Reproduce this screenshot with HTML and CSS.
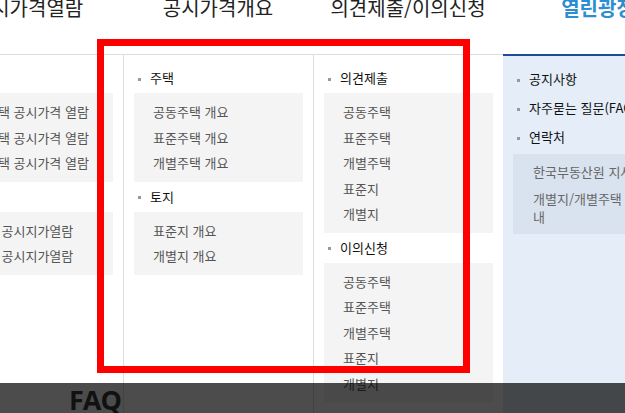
FILE: index.html
```html
<!DOCTYPE html>
<html lang="ko">
  <head>
    <meta charset="UTF-8" />
    <meta name="viewport" content="width=device-width, initial-scale=1.0" />
    <title>공시가격개요</title>

    <!-- CSS -->
    <link rel="stylesheet" href="styles.css">
  </head>
  <body>
    <div id="wrapper">
      <ul class="gnb">
        <li><a href="#">공시가격열람</a></li>
        <li><a href="#">공시가격개요</a></li>
        <li><a href="#">의견제출/이의신청</a></li>
        <li class="on"><a href="#">열린광장</a></li>
      </ul>

      <div class="mega">
        <div class="col">
          <p class="tit">주택</p>
          <ul class="sub">
            <li>공동주택 공시가격 열람</li>
            <li>표준주택 공시가격 열람</li>
            <li>개별주택 공시가격 열람</li>
          </ul>
          <p class="tit">토지</p>
          <ul class="sub">
            <li>표준지 공시지가열람</li>
            <li>개별지 공시지가열람</li>
          </ul>
        </div>
        <div class="col">
          <p class="tit">주택</p>
          <ul class="sub">
            <li>공동주택 개요</li>
            <li>표준주택 개요</li>
            <li>개별주택 개요</li>
          </ul>
          <p class="tit">토지</p>
          <ul class="sub">
            <li>표준지 개요</li>
            <li>개별지 개요</li>
          </ul>
        </div>
        <div class="col">
          <p class="tit">의견제출</p>
          <ul class="sub">
            <li>공동주택</li>
            <li>표준주택</li>
            <li>개별주택</li>
            <li>표준지</li>
            <li>개별지</li>
          </ul>
          <p class="tit">이의신청</p>
          <ul class="sub">
            <li>공동주택</li>
            <li>표준주택</li>
            <li>개별주택</li>
            <li>표준지</li>
            <li>개별지</li>
          </ul>
        </div>
        <div class="col open">
          <p class="tit">공지사항</p>
          <p class="tit">자주묻는 질문(FAQ)</p>
          <p class="tit">연락처</p>
          <ul class="sub">
            <li>한국부동산원 지사 안내</li>
            <li>개별지/개별주택 문의처 안내</li>
          </ul>
        </div>
      </div>

      <div class="mark"></div>

      <div class="dim">
        <h2 class="faq">FAQ</h2>
      </div>
    </div>
  </body>
</html>
```

FILE: styles.css
```css
html {
  font-family: "Noto Sans CJK KR", "Noto Sans", sans-serif;
}

body {
  margin: 0;
  width: 625px;
  height: 413px;
  overflow: hidden;
  background-color: #fff;
}

ul {
  list-style: none;
  margin: 0;
  padding: 0;
}

a {
  color: inherit;
  text-decoration: none;
}

#wrapper {
  position: relative;
  height: 413px;
}

/* top menu */
.gnb {
  display: flex;
  height: 54px;
  margin-left: -67px;
}

.gnb li {
  width: 190px;
  flex-shrink: 0;
  text-align: center;
  font-size: 20px;
  line-height: 16px;
  color: #222;
}

.gnb li.on {
  color: #2b8ed0;
  font-weight: bold;
}

/* dropdown */
.mega {
  display: flex;
  margin-left: -67px;
  height: 400px;
  border-top: 1px solid #ddd;
}

.col {
  box-sizing: border-box;
  width: 190px;
  flex-shrink: 0;
  padding: 8px 10px 0;
  border-left: 1px solid #ddd;
}

.col:first-child {
  border-left: none;
}

.tit {
  margin: 0;
  height: 30px;
  padding-left: 4px;
  font-size: 13px;
  line-height: 30px;
  color: #111;
}

.tit::before {
  content: "";
  display: inline-block;
  width: 3px;
  height: 3px;
  margin-right: 9px;
  vertical-align: middle;
  background-color: #999;
}

.sub {
  padding: 6px 0;
  background-color: #f4f4f4;
}

.sub li {
  padding-left: 19px;
  font-size: 13px;
  line-height: 25.5px;
  color: #555;
  white-space: nowrap;
}

.col.open {
  width: 200px;
  margin-top: -1px;
  border-left: none;
  border-top: 2px solid #1f4b9b;
  background-color: #e4edf8;
}

.col.open .tit {
  height: 29px;
  line-height: 29px;
}

.col.open .sub {
  margin-top: 3px;
  padding: 4px 0;
  background-color: #d9e3ef;
}

.col.open .sub li {
  width: 150px;
  padding: 4.5px 20px;
  line-height: 18px;
  color: #666;
  white-space: normal;
}

/* red highlight box */
.mark {
  position: absolute;
  left: 97px;
  top: 39px;
  width: 359px;
  height: 320px;
  border: 7px solid #ff0000;
}

/* dark bar at the bottom */
.dim {
  position: absolute;
  left: 0;
  right: 0;
  bottom: 0;
  height: 30px;
  background-color: rgba(0, 0, 0, 0.7);
}

.faq {
  margin: 0 0 0 69px;
  font-family: "Open Sans", sans-serif;
  font-size: 27px;
  line-height: 33px;
  letter-spacing: -1px;
  color: #111;
}
```
